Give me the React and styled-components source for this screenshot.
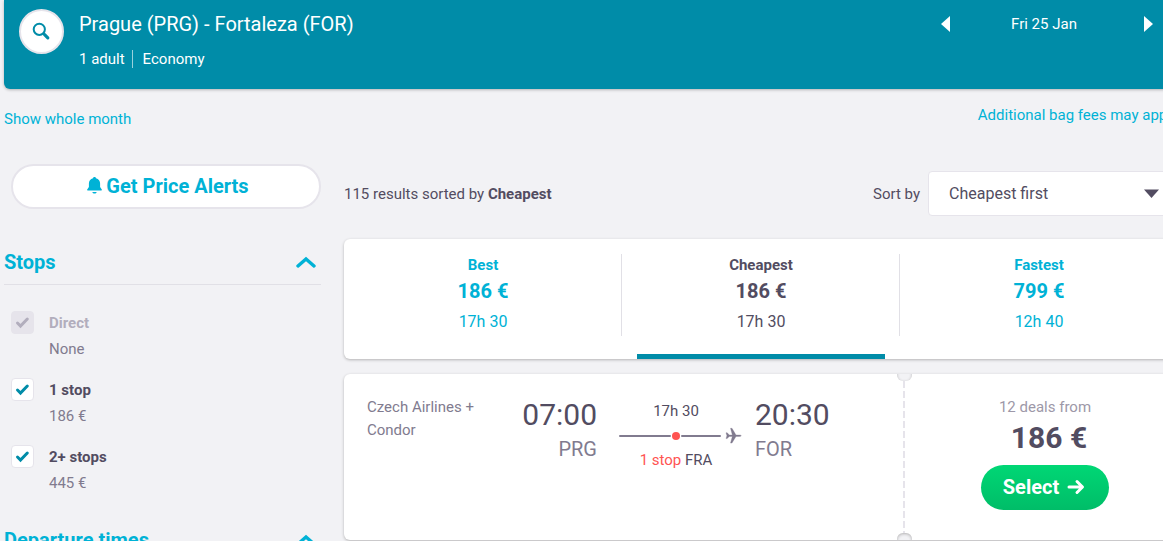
import React from "react";
import styled, { createGlobalStyle } from "styled-components";

const GlobalStyle = createGlobalStyle`
  *, *::before, *::after { box-sizing: border-box; }
  body {
    margin: 0;
    background: #f2f2f5;
    color: #524c61;
    font: 400 15px/22px Roboto, sans-serif;
    overflow-x: hidden;
  }
  button, select, input { font: inherit; color: inherit; margin: 0; }
  button { border: 0; padding: 0; background: none; cursor: pointer; }
  h1, h2, p, dl, dd, ul { margin: 0; padding: 0; }
  svg { display: block; flex: none; }
`;

const shadow = "0 1px 3px 0 rgba(37, 32, 31, 0.3)";

const Page = styled.div`
  margin: 0 -15px 0 4px;
`;

const SearchBar = styled.header`
  display: flex;
  align-items: flex-start;
  gap: 15px;
  height: 89px;
  padding: 9px 25px 0 15px;
  border-radius: 0 0 6px 6px;
  background: #008ca8;
  color: #fff;
  box-shadow: ${shadow};
`;

const SearchButton = styled.button`
  display: grid;
  place-items: center;
  width: 45px;
  height: 45px;
  border: 2px solid #e6e4eb;
  border-radius: 50%;
  background: #fff;
`;

const Trip = styled.div`
  flex: 1;
  padding-top: 3px;
`;

const Route = styled.h1`
  font-size: 20px;
  font-weight: 400;
  line-height: 24px;
`;

const TripDetails = styled.p`
  display: flex;
  align-items: center;
  gap: 7px;
  padding-top: 12px;
`;

const CabinClass = styled.span`
  padding-left: 10px;
  border-left: 1px solid rgba(255, 255, 255, 0.6);
  line-height: 18px;
`;

const DateNav = styled.nav`
  display: flex;
  align-items: center;
  justify-content: space-between;
  width: 212px;
  padding-top: 4px;
`;

const CurrentDate = styled.span`
  padding-right: 6px;
`;

const Links = styled.div`
  display: flex;
  justify-content: space-between;
  padding-top: 15px;
  height: 75px;
`;

const TextLink = styled.a`
  padding-top: ${(p) => (p.$lower ? "4px" : "0")};
  color: #00b2d6;
  text-decoration: none;
`;

const Columns = styled.div`
  display: grid;
  grid-template-columns: 317px minmax(0, 1fr);
  gap: 23px;
`;

const AlertButton = styled.button`
  display: flex;
  align-items: center;
  justify-content: center;
  gap: 4px;
  width: 310px;
  height: 45px;
  margin-left: 7px;
  padding: 0 0 2px 4px;
  border: 2px solid #e6e4eb;
  border-radius: 23px;
  background: #fff;
  color: #00b2d6;
  font-size: 20px;
  font-weight: 700;
`;

const Filters = styled.div`
  padding-top: 31px;
`;

const FilterGroup = styled.section`
  height: 278px;
`;

const FilterToggle = styled.button`
  display: flex;
  align-items: center;
  justify-content: space-between;
  width: 100%;
  height: 45px;
  padding-right: 5px;
  border-bottom: 1px solid #e1e0e6;
  color: #00b2d6;
  font-size: 20px;
  font-weight: 700;
`;

const Options = styled.ul`
  display: grid;
  gap: 15px;
  padding: 25px 0 0 7px;
  list-style: none;
`;

const Option = styled.label`
  display: grid;
  grid-template-columns: 23px 1fr;
  column-gap: 15px;
  line-height: 26px;
`;

const Box = styled.span`
  display: grid;
  width: 23px;
  height: 23px;
  margin-top: 1px;
  place-items: center;
  & > * { grid-area: 1 / 1; }
  svg { pointer-events: none; z-index: 1; }
`;

const Tick = styled.input`
  appearance: none;
  width: 23px;
  height: 23px;
  border: 1px solid #e6e4eb;
  border-radius: 4px;
  background: #fff;
  &:disabled { background: #e6e4eb; }
  &:not(:checked) + svg { visibility: hidden; }
`;

const OptionName = styled.span`
  color: ${(p) => (p.$muted ? "#b2aebd" : "#524c61")};
  font-weight: 700;
`;

const OptionPrice = styled.span`
  grid-column: 2;
  color: #817b8f;
`;

const Results = styled.main`
  padding-top: 7px;
`;

const SortRow = styled.div`
  display: flex;
  align-items: center;
  justify-content: space-between;
`;

const SortLabel = styled.label`
  display: flex;
  align-items: center;
  gap: 8px;
`;

const SelectWrap = styled.span`
  display: grid;
  align-items: center;
  width: 250px;
  & > * { grid-area: 1 / 1; }
  svg { justify-self: end; margin-right: 19px; pointer-events: none; }
`;

const SortSelect = styled.select`
  appearance: none;
  width: 100%;
  height: 45px;
  padding: 0 40px 0 20px;
  border: 1px solid #e6e4eb;
  border-radius: 4px;
  background: #fff;
  font-size: 16px;
`;

const Card = styled.div`
  border-radius: 6px;
  background: #fff;
  box-shadow: ${shadow};
`;

const Tabs = styled(Card)`
  display: grid;
  grid-template-columns: repeat(3, 1fr);
  height: 120px;
  margin-top: 23px;
`;

const Tab = styled.button`
  display: flex;
  flex-direction: column;
  align-items: center;
  justify-content: space-between;
  padding: 15px 0 0;
  color: ${(p) => (p.$active ? "#524c61" : "#00b2d6")};
`;

const TabBody = styled.span`
  display: grid;
  width: 100%;
  height: 82px;
  align-content: start;
  box-shadow: ${(p) => (p.$last ? "none" : "inset -1px 0 #e1e0e6")};
`;

const TabPrice = styled.strong`
  font-size: 20px;
  line-height: 30px;
`;

const TabTime = styled.span`
  font-size: 16px;
  line-height: 32px;
`;

const Underline = styled.span`
  width: calc(100% - 30px);
  height: 5px;
  background: #008ca8;
`;

const Ticket = styled(Card)`
  display: grid;
  grid-template-columns: minmax(0, 1fr) 2px 273px;
  height: 166px;
  margin-top: 15px;
  overflow: hidden;
`;

const Flight = styled.div`
  display: flex;
  align-items: flex-start;
  padding: 22px 0 0 23px;
`;

const Airline = styled.p`
  width: 130px;
  color: #817b8f;
  line-height: 23px;
`;

const Endpoint = styled.p`
  display: grid;
  width: 100px;
  text-align: ${(p) => p.$align};
`;

const Time = styled.span`
  font-size: 30px;
  line-height: 38px;
`;

const Airport = styled.span`
  color: #817b8f;
  font-size: 20px;
  line-height: 30px;
`;

const Leg = styled.div`
  display: grid;
  grid-template-columns: 100%;
  gap: 1px;
  width: 114px;
  margin: 4px 22px 0;
  text-align: center;
  line-height: 23px;
`;

const Stop = styled.span`
  color: #ff5452;
`;

const Perforation = styled.div`
  position: relative;
  background: repeating-linear-gradient(#e6e4eb 0 4px, #fff 4px 7px, #e6e4eb 7px 10px);
`;

const Notch = styled.span`
  position: absolute;
  left: -6px;
  ${(p) => p.$edge}: -8px;
  width: 15px;
  height: 15px;
  border-radius: 6px;
  background: #f2f2f5;
  box-shadow: inset ${shadow};
`;

const Deal = styled.div`
  display: flex;
  flex-direction: column;
  align-items: center;
  padding: 22px 0 0 7px;
`;

const DealCount = styled.span`
  color: #9d98a8;
`;

const DealPrice = styled.strong`
  padding: 0 0 7px 8px;
  font-size: 30px;
  line-height: 40px;
`;

const SelectButton = styled.button`
  display: flex;
  align-items: center;
  justify-content: center;
  gap: 8px;
  width: 128px;
  height: 45px;
  padding: 0 2px 2px 0;
  border-radius: 23px;
  background: linear-gradient(#00d775, #00bd68);
  color: #fff;
  font-size: 20px;
  font-weight: 700;
`;

const SearchIcon = () => (
  <svg width="19" height="19" viewBox="0 0 19 19" fill="none" stroke="#008ca8">
    <circle cx="7.3" cy="7.3" r="5.6" strokeWidth="2" />
    <path d="M11.500 11.500 12.800 12.800" strokeWidth="2" />
    <path d="M12.600 12.600 15.800 15.800" strokeWidth="3.200" strokeLinecap="round" />
  </svg>
);

const Triangle = ({ d, w, h, color }) => (
  <svg width={w} height={h} viewBox={`0 0 ${w} ${h}`}>
    <path d={d} fill={color} />
  </svg>
);

const BellIcon = () => (
  <svg width="15" height="17" viewBox="0 0 15 17" fill="currentColor">
    <path d="M7.5 0C6.7 0 6.2.5 6 1.2 3.300 1.900 1.900 4 1.900 6.500V10L.2 12.600C0 13 .1 13.500.6 13.500H14.400C14.900 13.500 15 13 14.800 12.600L13.100 10V6.500C13.100 4 11.700 1.900 9 1.200 8.800.5 8.300 0 7.500 0Z" />
    <path d="M5.300 15H9.700C9.400 16 8.600 16.600 7.500 16.600S5.600 16 5.300 15Z" />
  </svg>
);

const Chevron = () => (
  <svg width="20" height="12" viewBox="0 0 20 12" fill="none" stroke="currentColor" strokeWidth="3.400" strokeLinecap="round">
    <path d="M2 10 10 3 18 10" />
  </svg>
);

const Check = ({ color }) => (
  <svg width="15" height="13" viewBox="0 0 15 13" fill="none" stroke={color} strokeWidth="3" strokeLinecap="round">
    <path d="M2.500 7 5.500 10 12.300 3" />
  </svg>
);

const LegLine = () => (
  <svg width="123" height="24" viewBox="0 0 123 24">
    <path d="M1 12H51M63 12H101" stroke="#817b8f" strokeWidth="2" strokeLinecap="round" />
    <circle cx="57" cy="12" r="4" fill="#ff5452" />
    <path
      d="M107 8.800H108.200L110.300 11H113.300L111.500 4.300H113L117 11H120.300Q122.300 11.100 122.300 11.700T120.300 12.400H117L113 19.100H111.500L113.300 12.400H110.300L108.200 14.600H107L107.900 11.700Z"
      fill="#817b8f"
      stroke="#817b8f"
      strokeWidth="0.300"
    />
  </svg>
);

const ArrowIcon = () => (
  <svg width="18" height="16" viewBox="0 0 18 16" fill="none" stroke="#fff" strokeWidth="3" strokeLinecap="round" strokeLinejoin="round">
    <path d="M2 8H15M10 2.500 15.500 8 10 13.500" />
  </svg>
);

const stops = [
  { name: "Direct", price: "None", disabled: true },
  { name: "1 stop", price: "186 €" },
  { name: "2+ stops", price: "445 €" },
];

const tabs = [
  { name: "Best", price: "186 €", time: "17h 30" },
  { name: "Cheapest", price: "186 €", time: "17h 30", active: true },
  { name: "Fastest", price: "799 €", time: "12h 40" },
];

export default function App() {
  return (
    <>
      <GlobalStyle />
      <Page>
        <SearchBar>
          <SearchButton aria-label="Search"><SearchIcon /></SearchButton>
          <Trip>
            <Route>Prague (PRG) - Fortaleza (FOR)</Route>
            <TripDetails>
              <span>1 adult</span>
              <CabinClass>Economy</CabinClass>
            </TripDetails>
          </Trip>
          <DateNav>
            <button aria-label="Previous day"><Triangle w={9} h={16} d="M9 0V16L0 8Z" color="#fff" /></button>
            <CurrentDate>Fri 25 Jan</CurrentDate>
            <button aria-label="Next day"><Triangle w={9} h={16} d="M0 0V16L9 8Z" color="#fff" /></button>
          </DateNav>
        </SearchBar>
        <Links>
          <TextLink href="#month" $lower>Show whole month</TextLink>
          <TextLink href="#bags">Additional bag fees may apply</TextLink>
        </Links>
        <Columns>
          <aside>
            <AlertButton><BellIcon />Get Price Alerts</AlertButton>
            <Filters>
              <FilterGroup>
                <FilterToggle>Stops<Chevron /></FilterToggle>
                <Options>
                  {stops.map((s) => (
                    <li key={s.name}>
                      <Option>
                        <Box>
                          <Tick type="checkbox" defaultChecked disabled={s.disabled} />
                          <Check color={s.disabled ? "#b2aebd" : "#008ca8"} />
                        </Box>
                        <OptionName $muted={s.disabled}>{s.name}</OptionName>
                        <OptionPrice>{s.price}</OptionPrice>
                      </Option>
                    </li>
                  ))}
                </Options>
              </FilterGroup>
              <FilterToggle>Departure times<Chevron /></FilterToggle>
            </Filters>
          </aside>
          <Results>
            <SortRow>
              <p>115 results sorted by <strong>Cheapest</strong></p>
              <SortLabel>
                Sort by
                <SelectWrap>
                  <SortSelect defaultValue="Cheapest first">
                    <option>Cheapest first</option>
                  </SortSelect>
                  <Triangle w={15} h={9} d="M0 .5H15L7.500 9Z" color="#524c61" />
                </SelectWrap>
              </SortLabel>
            </SortRow>
            <Tabs>
              {tabs.map((t, i) => (
                <Tab key={t.name} $active={t.active}>
                  <TabBody $last={i === tabs.length - 1}>
                    <strong>{t.name}</strong>
                    <TabPrice>{t.price}</TabPrice>
                    <TabTime>{t.time}</TabTime>
                  </TabBody>
                  {t.active && <Underline />}
                </Tab>
              ))}
            </Tabs>
            <Ticket as="article">
              <Flight>
                <Airline>Czech Airlines + Condor</Airline>
                <Endpoint $align="right">
                  <Time>07:00</Time>
                  <Airport>PRG</Airport>
                </Endpoint>
                <Leg>
                  <span>17h 30</span>
                  <LegLine />
                  <span><Stop>1 stop</Stop> FRA</span>
                </Leg>
                <Endpoint $align="left">
                  <Time>20:30</Time>
                  <Airport>FOR</Airport>
                </Endpoint>
              </Flight>
              <Perforation>
                <Notch $edge="top" />
                <Notch $edge="bottom" />
              </Perforation>
              <Deal>
                <DealCount>12 deals from</DealCount>
                <DealPrice>186 €</DealPrice>
                <SelectButton>Select <ArrowIcon /></SelectButton>
              </Deal>
            </Ticket>
          </Results>
        </Columns>
      </Page>
    </>
  );
}
